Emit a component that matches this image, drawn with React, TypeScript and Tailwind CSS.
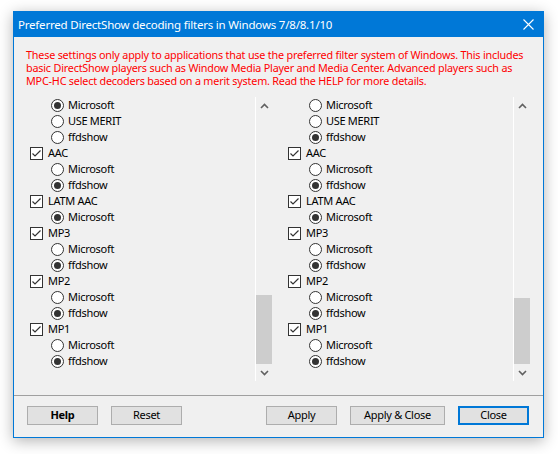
import React from "react";

type Row = { kind: "radio" | "check"; label: string; on: boolean };

const r = (label: string, on = false): Row => ({ kind: "radio", label, on });
const c = (label: string): Row => ({ kind: "check", label, on: true });

const tail: Row[] = [
  c("AAC"),
  r("Microsoft"),
  r("ffdshow", true),
  c("LATM AAC"),
  r("Microsoft", true),
  c("MP3"),
  r("Microsoft"),
  r("ffdshow", true),
  c("MP2"),
  r("Microsoft"),
  r("ffdshow", true),
  c("MP1"),
  r("Microsoft"),
  r("ffdshow", true),
];

const leftRows: Row[] = [r("Microsoft", true), r("USE MERIT"), r("ffdshow"), ...tail];
const rightRows: Row[] = [r("Microsoft"), r("USE MERIT"), r("ffdshow", true), ...tail];

function Radio({ on }: { on: boolean }) {
  return (
    <span className="flex h-[13px] w-[13px] shrink-0 items-center justify-center rounded-full border border-[#333] bg-white">
      {on && <span className="h-[7px] w-[7px] rounded-full bg-[#333]" />}
    </span>
  );
}

function Check({ on }: { on: boolean }) {
  return (
    <span className="flex h-[13px] w-[13px] shrink-0 items-center justify-center border border-[#333] bg-white">
      {on && (
        <svg width="11" height="11" viewBox="0 0 11 11">
          <path d="M1.5 5.5 L4 8 L9.5 2.5" fill="none" stroke="#333" strokeWidth="1.2" />
        </svg>
      )}
    </span>
  );
}

function Chevron({ down }: { down?: boolean }) {
  return (
    <svg width="9" height="6" viewBox="0 0 9 6">
      <path
        d={down ? "M1 1 L4.5 4.5 L8 1" : "M1 5 L4.5 1.5 L8 5"}
        fill="none"
        stroke="#606060"
        strokeWidth="1.6"
      />
    </svg>
  );
}

function Panel({ rows, thumbTop }: { rows: Row[]; thumbTop: string }) {
  return (
    <div className="flex h-[284px] w-[252px]">
      <div className="flex-1 overflow-hidden pl-[10px]">
        {rows.map((row, i) =>
          row.kind === "check" ? (
            <div key={i} className="flex h-4 items-center gap-[5px]">
              <Check on={row.on} />
              <span>{row.label}</span>
            </div>
          ) : (
            <div key={i} className="flex h-4 items-center gap-[4px] pl-[21px]">
              <Radio on={row.on} />
              <span>{row.label}</span>
            </div>
          )
        )}
      </div>
      <div className="flex w-[17px] flex-col border-l border-white">
        <div className="flex h-[17px] items-center justify-center">
          <Chevron />
        </div>
        <div className="flex flex-1 flex-col">
          <div className={thumbTop} />
          <div className="flex-1 bg-[#cdcdcd]" />
        </div>
        <div className="flex h-[17px] items-center justify-center">
          <Chevron down />
        </div>
      </div>
    </div>
  );
}

function Btn({ children, bold, focus }: { children: React.ReactNode; bold?: boolean; focus?: boolean }) {
  return (
    <button
      className={`flex h-[19px] w-[71px] items-center justify-center bg-[#e1e1e1] text-black ${
        focus ? "border-2 border-[#0078d7]" : "border border-[#adadad]"
      } ${bold ? "font-bold" : ""}`}
    >
      {children}
    </button>
  );
}

export default function App() {
  return (
    <div
      className="h-[454px] w-[558px] bg-white pl-[13px] pt-[11px] text-[11px] tracking-[-0.3px] text-black"
      style={{ fontFamily: '"Noto Sans", "Segoe UI", sans-serif' }}
    >
      <div className="flex h-[427px] w-[531px] flex-col border border-[#0078d7] bg-[#f0f0f0] shadow-[0_3px_14px_rgba(0,0,0,0.3)]">
        {/* barra de título */}
        <div className="flex h-[25px] shrink-0 items-center justify-between bg-[#0078d7] pl-[4px] pr-[9px] text-[11.5px] tracking-[-0.2px] text-white">
          <span>Preferred DirectShow decoding filters in Windows 7/8/8.1/10</span>
          <svg width="11" height="11" viewBox="0 0 11 11">
            <path d="M0.5 0.5 L10.5 10.5 M10.5 0.5 L0.5 10.5" stroke="white" strokeWidth="1.1" />
          </svg>
        </div>

        <div className="whitespace-nowrap pl-[12px] pt-[11px] text-[10.8px] leading-[13px] tracking-[-0.2px] text-[#ff0000]">
          These settings only apply to applications that use the preferred filter system of Windows. This includes
          <br />
          basic DirectShow players such as Window Media Player and Media Center. Advanced players such as
          <br />
          MPC-HC select decoders based on a merit system. Read the HELP for more details.
        </div>

        <div className="mt-[10px] flex gap-[6px] pl-[6px]">
          <Panel rows={leftRows} thumbTop="h-[181px]" />
          <Panel rows={rightRows} thumbTop="h-[184px]" />
        </div>

        <div className="mt-[14px] h-px bg-[#a0a0a0]" />

        <div className="flex items-center pl-[13px] pt-[10px]">
          <Btn bold>Help</Btn>
          <div className="ml-[13px]">
            <Btn>Reset</Btn>
          </div>
          <div className="ml-[84px]">
            <Btn>Apply</Btn>
          </div>
          <div className="ml-[13px]">
            <button className="flex h-[19px] w-[95px] items-center justify-center border border-[#adadad] bg-[#e1e1e1]">
              Apply &amp; Close
            </button>
          </div>
          <div className="ml-[13px]">
            <Btn focus>Close</Btn>
          </div>
        </div>
      </div>
    </div>
  );
}
